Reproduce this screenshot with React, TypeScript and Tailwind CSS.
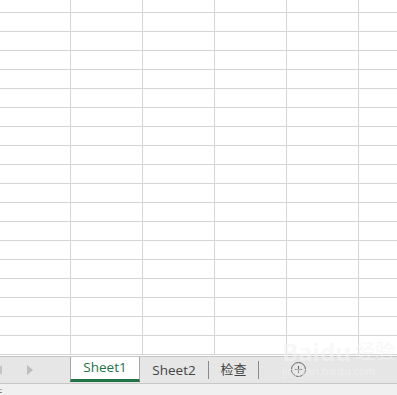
import { Plus } from "lucide-react"

const colWidths = [71, 72, 72, 72, 72, 40]
const rowCount = 18

function GridRow({ height }: { height: number }) {
  return (
    <div className="flex shrink-0" style={{ height }}>
      {colWidths.map((w, i) => (
        <div key={i} className="shrink-0 border-r border-b border-[#d4d4d4] bg-white" style={{ width: w }} />
      ))}
    </div>
  )
}

export default function App() {
  return (
    <div className="relative h-[395px] w-[397px] overflow-hidden bg-white font-['Open_Sans','Noto_Sans_CJK_SC',sans-serif]">
      {/* Sheet grid */}
      <div className="flex h-[356px] flex-col overflow-hidden">
        <GridRow height={13} />
        {Array.from({ length: rowCount }).map((_, i) => (
          <GridRow key={i} height={19} />
        ))}
      </div>

      {/* Sheet tabs */}
      <div className="flex h-[28px] items-stretch border-t border-b border-[#c6c6c6] bg-[#e6e6e6]">
        <div className="flex w-[70px] shrink-0 items-center">
          <span className="ml-[-4px] h-0 w-0 border-y-[5px] border-r-[6px] border-y-transparent border-r-[#c4c4c4]" />
          <span className="ml-[25px] h-0 w-0 border-y-[5px] border-l-[6px] border-y-transparent border-l-[#bdbdbd]" />
        </div>
        <div className="mb-[1px] flex w-[70px] shrink-0 items-center justify-center border-x border-b-[3px] border-x-[#a6a6a6] border-b-[#217346] bg-white pb-[1px] text-[13.5px] text-[#217346]">
          Sheet1
        </div>
        <div className="flex w-[68px] shrink-0 items-center justify-center text-[13.5px] text-[#444]">Sheet2</div>
        <div className="my-[4px] w-px bg-[#8a8a8a]" />
        <div className="flex w-[49px] shrink-0 items-center justify-center text-[13px] text-[#444]">检查</div>
        <div className="my-[4px] w-px bg-[#8a8a8a]" />
        <div className="flex w-[78px] shrink-0 items-center justify-center pb-[1px]">
          <span className="flex h-[15px] w-[15px] items-center justify-center rounded-full border border-[#666]">
            <Plus size={11} strokeWidth={2} className="text-[#555]" />
          </span>
        </div>
      </div>

      {/* Status strip */}
      <div className="h-[11px] bg-[#f0f0f0] pt-[5px]">
        <div className="h-[1px] w-[2px] bg-[#aaa]" />
        <div className="mt-[2px] h-[1px] w-[2px] bg-[#888]" />
      </div>

      {/* Watermark */}
      <div className="pointer-events-none absolute left-[282px] top-[340px] flex flex-col items-start opacity-60">
        <div className="flex items-center gap-1 text-[24px] font-bold leading-none text-[#f4f4f4]">
          <span>Baidu</span>
          <span className="text-[20px] font-normal">经验</span>
        </div>
        <span className="text-[11px] leading-tight text-[#f4f4f4]">jingyan.baidu.com</span>
      </div>
    </div>
  )
}
